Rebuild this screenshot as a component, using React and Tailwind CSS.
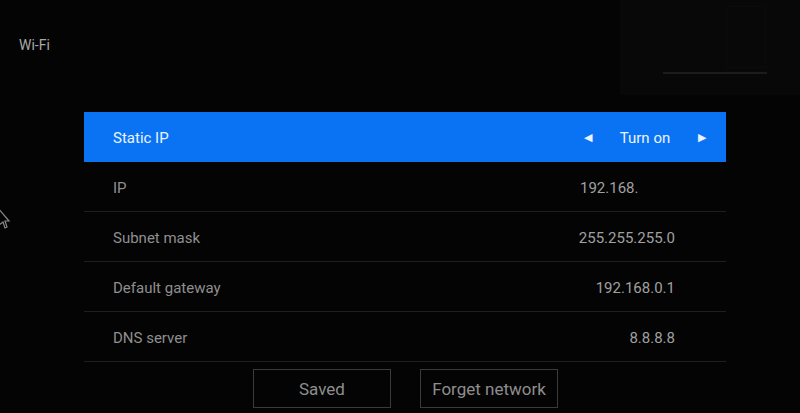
export default function App() {
  const rows = [
    { label: "IP", value: "192.168.", left: true },
    { label: "Subnet mask", value: "255.255.255.0" },
    { label: "Default gateway", value: "192.168.0.1" },
    { label: "DNS server", value: "8.8.8.8" },
  ];
  return (
    <div
      className="relative w-[800px] h-[413px] overflow-hidden bg-[#040404] text-[#9a9a9a]"
      style={{ fontFamily: "Roboto, 'Noto Sans', sans-serif" }}
    >
      <div className="absolute right-0 top-0 w-[180px] h-[95px] bg-[#080808]">
        <div className="absolute left-[43px] top-[72px] w-[104px] h-[2px] bg-[#1c1c1c]" />
        <div className="absolute left-[106px] top-[6px] w-[40px] h-[62px] border border-[#0b0b0b]" />
      </div>
      <div className="absolute left-[19px] top-[35px] text-[14px] text-[#a8a8a8]">Wi-Fi</div>
      <svg className="absolute left-0 top-[207px]" width="12" height="22" viewBox="0 0 12 22">
        <path d="M-2 1 L9 14 L5 14 L7 20 L5 21 L3 15 L-1 18 Z" fill="none" stroke="#8a8a8a" strokeWidth="1.2" />
      </svg>
      <div className="flex flex-col pt-[112px] pl-[84px] w-[726px]">
        <div className="flex items-center h-[50px] bg-[#0a73f4] pl-[29px] pt-[2px] text-[15px] text-[#eaf3ff]">
          <span className="flex-1">Static IP</span>
          <span className="text-[11px] mr-[26px]">◀</span>
          <span className="w-[54px] text-center">Turn on</span>
          <span className="text-[11px] ml-[26px] mr-[20px]">▶</span>
        </div>
        {rows.map((r) => (
          <div
            key={r.label}
            className="flex items-center h-[50px] border-b border-[#1e1e1e] pl-[29px] pt-[3px] text-[15px]"
          >
            <span className="flex-1 text-[#8f8f8f]">{r.label}</span>
            {r.left ? (
              <span className="w-[146px] text-[#a0a0a0]">{r.value}</span>
            ) : (
              <span className="pr-[51px] text-[#a0a0a0]">{r.value}</span>
            )}
          </div>
        ))}
      </div>
      <div className="flex gap-[29px] pl-[253px] pt-[7px]">
        <div className="w-[138px] h-[39px] pt-[2px] border border-[#3a3a3a] flex items-center justify-center text-[17px] text-[#8e8e8e]">
          Saved
        </div>
        <div className="w-[138px] h-[39px] pt-[2px] border border-[#3a3a3a] flex items-center justify-center text-[17px] text-[#8e8e8e]">
          Forget network
        </div>
      </div>
    </div>
  );
}
